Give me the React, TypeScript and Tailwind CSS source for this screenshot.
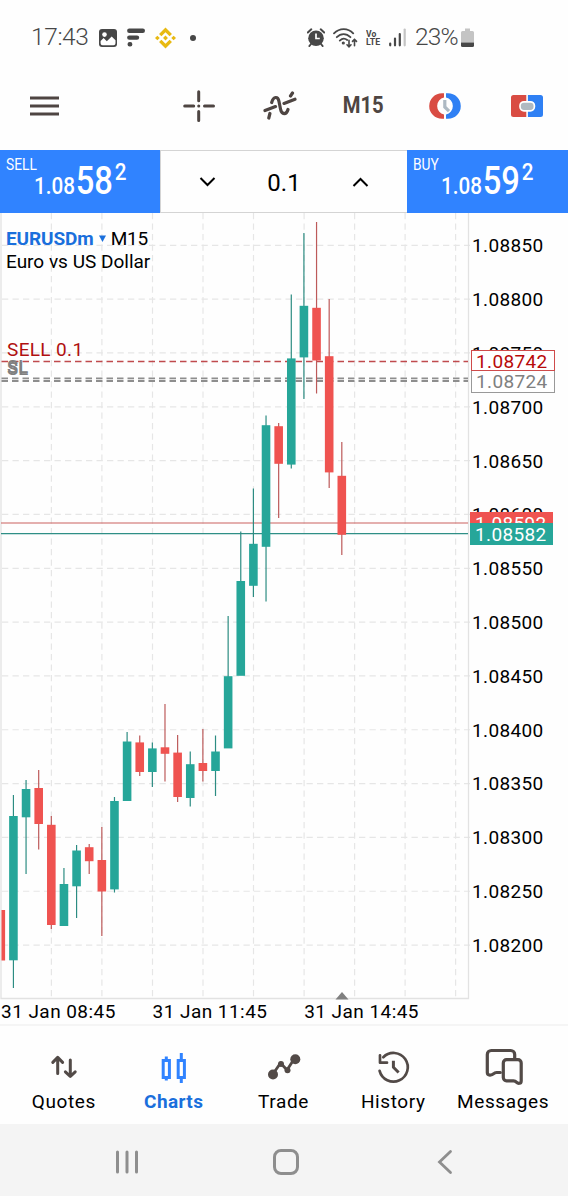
import type { ReactNode } from "react";

type Candle = [up: 0 | 1, top: number, bottom: number, high: number, low: number];

const CHART_TOP = 213;
const STEP = 12.63;

const candles: Candle[] = [
  [0, 910, 960.5, 910, 960],
  [1, 816, 960.3, 795, 988],
  [1, 789, 817.3, 780, 874],
  [0, 788, 824, 770, 849.5],
  [0, 824.8, 925, 816, 929],
  [1, 884, 926, 868, 926],
  [1, 850.5, 886.3, 845, 918],
  [0, 847.2, 861.2, 844, 874],
  [0, 860, 891.5, 827, 936],
  [1, 801, 889.4, 797, 892.5],
  [1, 741.5, 801, 732, 801],
  [0, 742.4, 772, 735.5, 776],
  [1, 748.4, 772, 742.5, 787],
  [0, 747.3, 753.8, 704, 781.5],
  [0, 752.6, 797, 735, 802],
  [1, 764.2, 798, 751.5, 806.5],
  [0, 763, 771, 729, 781.5],
  [1, 751.5, 771, 735.5, 796],
  [1, 676.2, 748.4, 616, 748],
  [1, 581, 675.8, 531.5, 675],
  [1, 543.8, 585.8, 488.5, 597],
  [1, 425.2, 546.8, 415.5, 601.5],
  [0, 426.2, 463.8, 423, 518],
  [1, 358.4, 464.6, 294.5, 468.5],
  [1, 305.8, 357.4, 233, 399],
  [0, 307.8, 360.5, 222, 393.5],
  [0, 356.2, 472.4, 299, 488],
  [0, 475.8, 534.8, 442, 555],
];

const prices = [
  "1.08850", "1.08800", "1.08750", "1.08700", "1.08650", "1.08600", "1.08550",
  "1.08500", "1.08450", "1.08400", "1.08350", "1.08300", "1.08250", "1.08200",
];

const gridX = [51.4, 101.9, 152.5, 203, 253.5, 304.1, 354.6, 405.1, 455.6];

function StatusBar() {
  return (
    <div className="flex h-[75px] items-center text-[#474747]">
      <span className="ml-[31px] mt-[-1px] w-[58px] whitespace-nowrap text-[24.5px] font-[350] leading-[28px] tracking-[-0.4px]">17:43</span>
      <svg className="ml-[10px] h-[18px] w-[18px]" viewBox="0 0 18 18">
        <rect width="18" height="18" rx="3" fill="currentColor" />
        <circle cx="5.5" cy="5.6" r="2.3" fill="#fff" />
        <path d="M1.600 14.200V12l3-3 3.200 3.300L12.700 7.500l3.800 3.700v3a2 2 0 0 1-2 2H3.600a2 2 0 0 1-2-2Z" fill="#fff" />
      </svg>
      <svg className="ml-[10px] h-[19px] w-[18px]" viewBox="0 0 18 19" stroke="currentColor" strokeWidth="4.400" strokeLinecap="round">
        <path d="M2.300 2.700H15.800M2.300 9.600H10M2.700 16.300H3.200" />
      </svg>
      <svg className="ml-[10px] h-[22px] w-[21px]" viewBox="0 0 126.610 126.610" fill="#e8b911">
        <path d="m38.730 53.200 24.590-24.580 24.600 24.600 14.300-14.310L63.320 0l-38.900 38.900zM0 63.310l14.300-14.310 14.310 14.310-14.310 14.300zM38.730 73.410l24.590 24.590 24.600-24.600 14.310 14.290-38.900 38.910-38.910-38.880zM98 63.310l14.300-14.310 14.310 14.300-14.310 14.320zM77.830 63.300 63.320 48.780 52.590 59.510l-3.780 3.800 14.510 14.510z" />
      </svg>
      <span className="ml-[14px] h-[6px] w-[6px] rounded-full bg-[#474747]" />
      <svg className="ml-[111px] h-[19px] w-[18px]" viewBox="0 0 18 19">
        <circle cx="9" cy="10.200" r="7.800" fill="currentColor" />
        <path d="M.8 4.500 4.300 1.300M17.200 4.500 13.700 1.300" stroke="currentColor" strokeWidth="2" strokeLinecap="round" />
        <path d="m4 16-1.600 2M14 16l1.600 2" stroke="currentColor" strokeWidth="2" strokeLinecap="round" />
        <path d="M9 5.500v5h3.800" stroke="#fff" strokeWidth="1.700" fill="none" />
      </svg>
      <svg className="ml-[8px] h-[20px] w-[25px]" viewBox="0 0 25 20" fill="none" stroke="currentColor" strokeWidth="1.800" strokeLinecap="round">
        <path d="M1 5.400C6.500-.4 15-.4 20.200 5.400M3.800 9.200c4-4.200 9.600-4.200 13.600 0M6.800 12.600c2.400-2.300 5.200-2.300 7.400-.6" />
        <circle cx="10.300" cy="15" r=".7" fill="currentColor" />
        <path d="M16 12.200v6.300M14 16.800l2 2 2-2M21.500 17.800v-6.300M19.500 13.400l2-2 2 2" strokeWidth="1.600" />
      </svg>
      <span className="ml-[8px] flex w-[16px] flex-col text-[9.500px] font-bold leading-[8px]">
        <span className="origin-left scale-x-90">Vo</span>
        <span className="origin-left scale-x-[0.92]">LTE</span>
      </span>
      <svg className="ml-[7px] h-[19px] w-[17px]" viewBox="0 0 17 19" strokeWidth="2.200" strokeLinecap="round">
        <path d="M1.200 15.500v1.800M6 10.500v6.800M10.800 6v11.300" stroke="currentColor" />
        <path d="M15.700 1.500v15.800" stroke="#c4c4c4" />
      </svg>
      <span className="ml-[9px] mt-[-1px] w-[46px] whitespace-nowrap text-[24.500px] font-[350] leading-[28px] tracking-[-0.900px]">23%</span>
      <svg className="h-[20px] w-[13px]" viewBox="0 0 13 20">
        <path d="M4 .5h5V3h2.500A1.500 1.500 0 0 1 13 4.500v10H0v-10A1.500 1.500 0 0 1 1.500 3H4Z" fill="#c4c4c4" />
        <path d="M0 14.500h13v3a1.500 1.500 0 0 1-1.500 1.500h-10A1.500 1.500 0 0 1 0 17.500Z" fill="#474747" />
      </svg>
    </div>
  );
}

function Toolbar() {
  return (
    <div className="flex h-[75px] items-center pb-[13px] text-[#4e4542]">
      <div className="flex w-[158px] pl-[30px]">
        <svg className="h-[32px] w-[29px]" viewBox="0 0 29 32" stroke="currentColor" strokeWidth="3">
          <path d="M0 8.100h29M0 16h29M0 24h29" />
        </svg>
      </div>
      <div className="flex w-[82px] justify-center">
        <svg className="h-[32px] w-[32px]" viewBox="0 0 32 32" stroke="currentColor" strokeWidth="3" strokeLinecap="round">
          <path d="M15.700 1.700v9M15.700 21.500v9M1.700 16h9M21.500 16h9M15.700 16h.1" />
        </svg>
      </div>
      <div className="flex w-[82px] justify-center pr-[2px]">
        <svg className="h-[30px] w-[36px]" viewBox="0 0 36 30" fill="none" stroke="currentColor" strokeWidth="3.200" strokeLinecap="round">
          <path d="M3 19.600 13.500 15.600M22 12.400 33 8.200M7.900 22.500 6.800 27M9.700 11.500C11.500 5 16 5 17 10.500L18.500 18C19.600 24 24.500 24 26 18.500M28.500 5 30.500 2" />
        </svg>
      </div>
      <div className="flex w-[82px] justify-center">
        <span className="scale-x-[0.88] text-[23px] font-bold leading-[30px]">M15</span>
      </div>
      <div className="flex w-[82px] justify-center">
        <svg className="h-[28px] w-[34px]" viewBox="0 0 34 28">
          <path d="M16 1.200h-2A12.800 12.800 0 0 0 14 26.800h2V22.500a8.700 8.700 0 0 1 0-17Z" fill="#d94c43" />
          <path d="M18 1.200h2A12.800 12.800 0 0 1 20 26.800h-2V22.500a8.700 8.700 0 0 0 0-17Z" fill="#2f80f4" />
          <path d="M16.800 8v7l4.200 4.200" fill="none" stroke="#adb9c3" strokeWidth="3.200" />
        </svg>
      </div>
      <div className="flex w-[82px] justify-center">
        <svg className="h-[24px] w-[32px]" viewBox="0 0 32 24">
          <path d="M15.300 1H2.500A2.500 2.500 0 0 0 0 3.500v17A2.500 2.500 0 0 0 2.500 23h12.800Z" fill="#d94c43" />
          <path d="M16.900 1h12.600A2.500 2.500 0 0 1 32 3.500v17a2.500 2.500 0 0 1-2.500 2.500H16.900Z" fill="#2f80f4" />
          <rect x="9" y="7.800" width="14.400" height="9" rx="4" fill="#b0b9c1" stroke="#fff" strokeWidth="1.700" />
        </svg>
      </div>
    </div>
  );
}

function Quote({ label, big }: { label: string; big: string }) {
  return (
    <div className="relative flex h-[63px] justify-start bg-[#3083ff] text-white">
      <span className="absolute left-[6px] top-[6px] origin-left scale-x-[0.86] text-[16px] leading-[18px]">{label}</span>
      <div className="ml-[34px] mt-[11px] flex h-[40px] origin-left scale-x-[0.86] items-baseline font-medium">
        <span className="text-[24px] leading-[40px]">1.08</span>
        <span className="ml-[1px] text-[38px] leading-[40px]">{big}</span>
        <span className="relative top-[-14px] ml-[2px] text-[24px] leading-[24px]">2</span>
      </div>
    </div>
  );
}

function TradeBar() {
  return (
    <div className="grid h-[63px] grid-cols-[160px_1fr_161px]">
      <Quote label="SELL" big="58" />
      <div className="flex items-center justify-between border-y border-l border-[#d4d4d4] px-[38px] text-black">
        <svg className="h-[10px] w-[17px]" viewBox="0 0 17 10" fill="none" stroke="currentColor" strokeWidth="2">
          <path d="m1.500 1 7 7 7-7" />
        </svg>
        <span className="mt-[2px] text-[24px] leading-[30px]">0.1</span>
        <svg className="h-[10px] w-[17px]" viewBox="0 0 17 10" fill="none" stroke="currentColor" strokeWidth="2">
          <path d="m1.500 9 7-7 7 7" />
        </svg>
      </div>
      <Quote label="BUY" big="59" />
    </div>
  );
}

function Plot() {
  return (
    <svg className="block h-[787px] w-[470px]" viewBox={`0 ${CHART_TOP} 470 787`}>
      <g stroke="#e6e6e6" strokeWidth="1.200" strokeDasharray="6.300 4.200">
        {prices.map((p, i) => (
          <line key={p} x1="2" x2="470" y1={245.3 + i * 53.83} y2={245.3 + i * 53.83} />
        ))}
        {gridX.map((x) => (
          <line key={x} x1={x} x2={x} y1={CHART_TOP} y2="998" />
        ))}
      </g>
      <path d="M1 213V998.500H468.500V213" fill="none" stroke="#e2e2e2" strokeWidth="1.300" />
      <line x1="1.500" x2="468" y1="361.600" y2="361.600" stroke="#c04a4d" strokeWidth="1.500" strokeDasharray="6.500 4" />
      <g stroke="#8e8e8e" strokeWidth="1.900" strokeDasharray="6.500 4">
        <line x1="1.500" x2="468" y1="378.400" y2="378.400" />
        <line x1="1.500" x2="468" y1="381" y2="381" />
      </g>
      <line x1="1" x2="468" y1="523" y2="523" stroke="#c9605f" strokeWidth="1.200" />
      <line x1="1" x2="468" y1="533.600" y2="533.600" stroke="#2f8f86" strokeWidth="1.200" />
      {candles.map(([up, top, bottom, high, low], i) => {
        const x = 0.8 + i * STEP;
        const left = Math.max(x - 4.3, 1.5);
        return (
          <g key={i}>
            {i > 0 && <line x1={x} x2={x} y1={high} y2={low} stroke={up ? "#2c8c82" : "#bd5a5a"} strokeWidth="1.200" />}
            <rect x={left} y={top} width={x + 4.3 - left} height={bottom - top} fill={up ? "#26a699" : "#ef5350"} />
          </g>
        );
      })}
      <path d="M335.500 999.500 342 992l6.500 7.500Z" fill="#808080" />
    </svg>
  );
}

function Chart() {
  return (
    <div className="relative h-[813px] border-b-2 border-[#f5f5f5] text-black">
      <div className="flex h-[787px]">
        <Plot />
        <div className="flex flex-col pl-[2px] pt-[5.800px]">
          {prices.map((p) => (
            <span key={p} className="flex h-[53.830px] items-center text-[19px] leading-none tracking-[0.350px]">{p}</span>
          ))}
        </div>
      </div>
      <div className="flex pl-[1px] text-[19px] leading-[24px] tracking-[0.450px]">
        <span className="w-[151.600px] whitespace-nowrap">31 Jan 08:45</span>
        <span className="w-[151.600px] whitespace-nowrap">31 Jan 11:45</span>
        <span className="whitespace-nowrap">31 Jan 14:45</span>
      </div>
      <div className="absolute left-[6px] top-[14px] text-[19px] leading-[23px]">
        <div className="flex items-center">
          <span className="font-bold tracking-[-0.100px] text-[#1a6fdc]">EURUSDm</span>
          <svg className="ml-[5px] mr-[5px] h-[7px] w-[7px]" viewBox="0 0 7 7"><path d="M0 .5h7L3.500 7Z" fill="#1a6fdc" /></svg>
          <span className="tracking-[-0.200px]">M15</span>
        </div>
        <div>Euro vs US Dollar</div>
      </div>
      <span className="absolute left-[7px] top-[125px] text-[19px] leading-[23px] tracking-[0.350px] text-[#b01010]">SELL 0.1</span>
      <span className="absolute left-[7px] top-[143px] text-[18.500px] font-medium leading-[23px] text-[#808080]">SL</span>
      <span className="absolute left-[7px] top-[145px] text-[18.500px] font-medium leading-[23px] text-[#808080]">SL</span>
      <span className="absolute left-[471px] top-[157px] flex h-[23px] w-[84px] items-center border border-[#999] bg-white pl-[4px] text-[19px] leading-none tracking-[0.350px] text-[#808080]">1.08724</span>
      <span className="absolute left-[471px] top-[137px] flex h-[21px] w-[84px] items-center border border-[#cf4b4b] bg-white pl-[4px] pt-[2px] text-[19px] leading-none tracking-[0.350px] text-[#b80a0a]">1.08742</span>
      <span className="absolute left-[470px] top-[299px] flex h-[22px] w-[83px] items-center bg-[#ef5350] pl-[5px] text-[19px] leading-none tracking-[0.350px] text-white">1.08592</span>
      <span className="absolute left-[470px] top-[310px] flex h-[22px] w-[83px] items-center bg-[#26a699] pl-[5px] text-[19px] leading-none tracking-[0.350px] text-white">1.08582</span>
    </div>
  );
}

function Tab({ label, active, children }: { label: string; active?: boolean; children: ReactNode }) {
  return (
    <div className="flex w-[109.800px] flex-col items-center">
      <svg
        className={active ? "h-[44px] w-[44px] text-[#3083ff]" : "h-[44px] w-[44px] text-[#524a47]"}
        viewBox="0 0 44 44"
        fill="none"
        stroke="currentColor"
        strokeWidth="3"
        strokeLinecap="round"
        strokeLinejoin="round"
      >
        {children}
      </svg>
      <span className={active ? "mt-[1px] text-[19px] font-bold leading-[24px] tracking-[0.400px] text-[#1a6fdc]" : "mt-[1px] text-[19px] leading-[24px] tracking-[0.600px] text-black"}>
        {label}
      </span>
    </div>
  );
}

function TabBar() {
  return (
    <div className="flex h-[98px] pl-[9px] pt-[19px]">
      <Tab label="Quotes">
        <path d="M15.700 28.500V13.500M10.800 17.400l4.900-5 4.900 5M28.300 15v15M23.400 26.800l4.900 4.700 4.900-4.700" />
      </Tab>
      <Tab label="Charts" active>
        <path strokeLinecap="butt" strokeLinejoin="miter" d="M11.200 15.500h6.200v17h-6.200ZM14.300 11.500v4M14.300 32.500v3M26.200 15.500h6.200v17h-6.200ZM29.300 8v7.500M29.300 32.500v5.500" />
      </Tab>
      <Tab label="Trade">
        <path d="m12 29 7.500-11 6.500 7 7.500-11.500" strokeWidth="2.800" />
        <g fill="currentColor" stroke="none">
          <circle cx="12" cy="29.500" r="5" />
          <circle cx="20" cy="19" r="3" />
          <circle cx="26.500" cy="25.200" r="3" />
          <circle cx="34.300" cy="14.200" r="5" />
        </g>
      </Tab>
      <Tab label="History">
        <path d="M8.600 25.800A14.300 14.300 0 1 0 12.300 12.200M9 10.300v7.400h7" strokeWidth="2.700" />
        <path d="M22.400 15.800v6.500l5.200 5.200" strokeLinecap="butt" />
      </Tab>
      <Tab label="Messages">
        <path d="M19.300 27.500h-3.800c-1.400 0-2 .3-2.800 1.200-1.600 1.600-6.400 2.400-6.400-1.200V9.500a4 4 0 0 1 4-4h19.400a4 4 0 0 1 4 4v4" strokeWidth="3.200" />
        <path d="M25.500 14.700h11.500a3.200 3.200 0 0 1 3.200 3.200v18c0 3-3.200 2.900-4.500 1.500-1.100-1.200-1.800-1.600-3.200-1.600h-7a3.200 3.200 0 0 1-3.200-3.200V17.900a3.200 3.200 0 0 1 3.200-3.200Z" strokeWidth="3.200" />
      </Tab>
    </div>
  );
}

function SystemNav() {
  return (
    <div className="flex h-[72px] items-center bg-[#f4f4f4] pl-[47px] pt-[3px] text-[#8e8e8e]">
      <div className="flex w-[159px] justify-center">
        <svg className="h-[26px] w-[26px]" viewBox="0 0 26 26" stroke="currentColor" strokeWidth="3" strokeLinecap="round">
          <path d="M3.500 3v20M13 3v20M22.500 3v20" />
        </svg>
      </div>
      <div className="flex w-[159px] justify-center">
        <span className="h-[26px] w-[26px] rounded-[8px] border-[3px] border-[#8e8e8e]" />
      </div>
      <div className="flex w-[159px] justify-center">
        <svg className="h-[26px] w-[16px]" viewBox="0 0 16 26" fill="none" stroke="currentColor" strokeWidth="2.800" strokeLinecap="round">
          <path d="M13.500 2.500 2.500 13l11 10.500" />
        </svg>
      </div>
    </div>
  );
}

export default function App() {
  return (
    <div className="h-[1200px] w-[568px] overflow-hidden bg-[#fefefe] font-[Roboto,sans-serif]">
      <StatusBar />
      <Toolbar />
      <TradeBar />
      <Chart />
      <TabBar />
      <SystemNav />
    </div>
  );
}
